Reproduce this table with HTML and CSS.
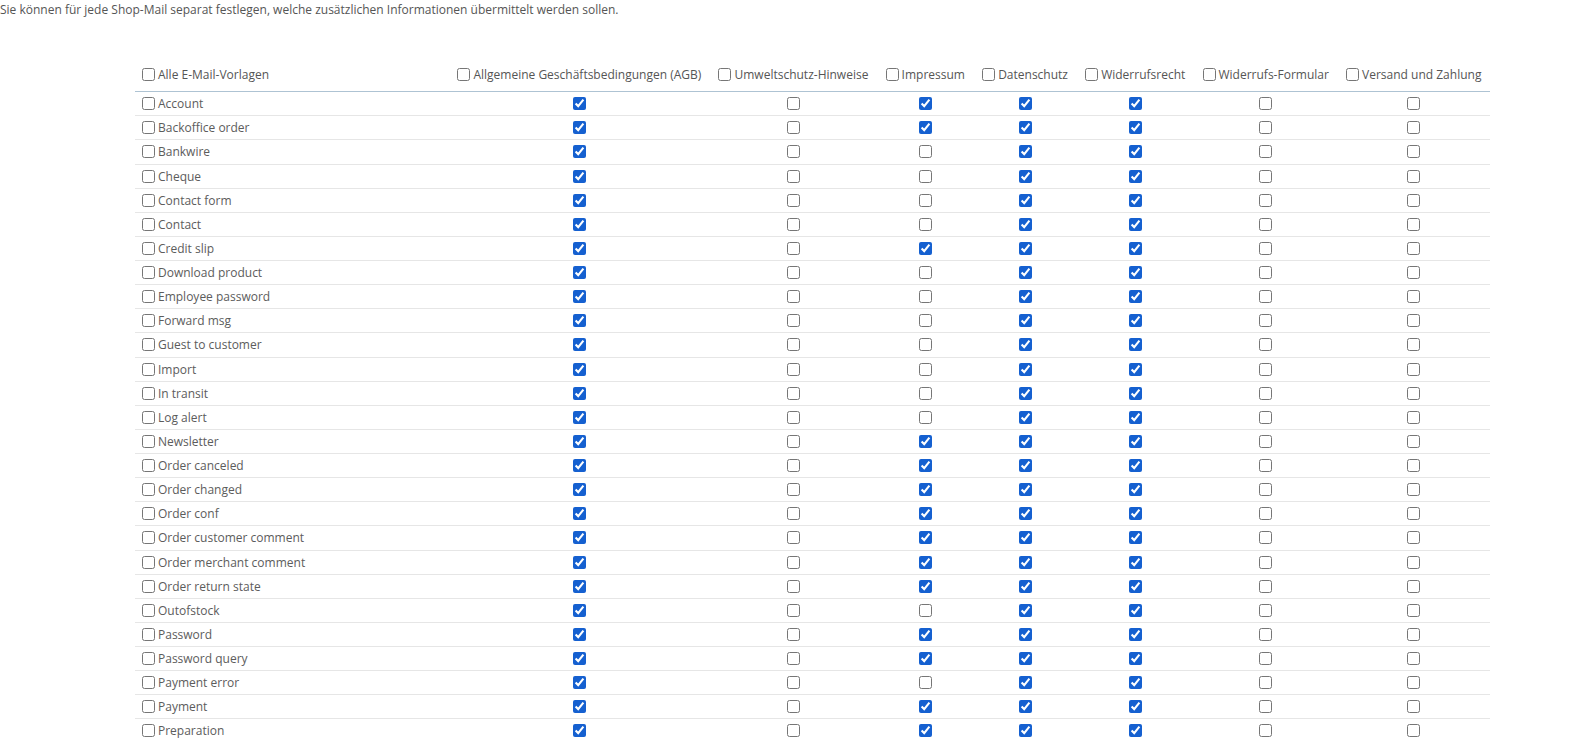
FILE: index.html
```html
<!DOCTYPE html>
<html lang="de">
<head>
<meta charset="utf-8">
<title>E-Mail-Vorlagen</title>
<link rel="stylesheet" href="styles.css">
</head>
<body>
<p class="intro">Sie können für jede Shop-Mail separat festlegen, welche zusätzlichen Informationen übermittelt werden sollen.</p>
<div class="wrap">
<table class="matrix">
<thead>
<tr>
<th class="name"><label><input type="checkbox">Alle E-Mail-Vorlagen</label></th>
<th class="opt"><label><input type="checkbox">Allgemeine Geschäftsbedingungen (AGB)</label></th>
<th class="opt"><label><input type="checkbox">Umweltschutz-Hinweise</label></th>
<th class="opt"><label><input type="checkbox">Impressum</label></th>
<th class="opt"><label><input type="checkbox">Datenschutz</label></th>
<th class="opt"><label><input type="checkbox">Widerrufsrecht</label></th>
<th class="opt"><label><input type="checkbox">Widerrufs-Formular</label></th>
<th class="opt"><label><input type="checkbox">Versand und Zahlung</label></th>
</tr>
</thead>
<tbody id="rows"></tbody>
</table>
</div>
<script src="app.js"></script>
</body>
</html>
```
FILE: styles.css
```css
html, body {
  margin: 0;
  padding: 0;
  background: #fff;
}
body {
  font-family: "Open Sans", "Liberation Sans", sans-serif;
  font-size: 12px;
  line-height: 1.42857;
  color: #555;
}
.intro {
  margin: 0;
  padding-top: 1px;
}
.wrap {
  padding: 40px 0 0 135px;
  width: 1355px;
}
.matrix {
  width: 100%;
  border-collapse: collapse;
}
.matrix th {
  font-weight: normal;
  text-align: left;
  padding: 8px 8.6px 8px;
  border-bottom: 1px solid #aec3d3;
  white-space: nowrap;
}
.matrix th.name {
  padding-left: 7px;
}
.matrix th.opt {
  width: 1%;
}
.matrix label {
  display: flex;
  align-items: center;
  height: 17px;
}
.matrix td label {
  height: 17.14px;
}
.matrix input[type="checkbox"] {
  width: 13px;
  height: 13px;
  margin: 0 3px 0 0;
  accent-color: #1560d0;
  flex: none;
}
.matrix td {
  padding: 3px 8px;
  border-top: 1px solid #e6e6e6;
  vertical-align: middle;
  white-space: nowrap;
}
.matrix td.name {
  padding-left: 7px;
  color: #5c5c5c;
}
.matrix td.cell {
  text-align: center;
}
.matrix .box {
  display: flex;
  align-items: center;
  justify-content: center;
  height: 17.14px;
}
.matrix .box input[type="checkbox"] {
  margin: 0;
}
```
FILE: app.js
```js
var data = [
  ["Account", "1011100"],
  ["Backoffice order", "1011100"],
  ["Bankwire", "1001100"],
  ["Cheque", "1001100"],
  ["Contact form", "1001100"],
  ["Contact", "1001100"],
  ["Credit slip", "1011100"],
  ["Download product", "1001100"],
  ["Employee password", "1001100"],
  ["Forward msg", "1001100"],
  ["Guest to customer", "1001100"],
  ["Import", "1001100"],
  ["In transit", "1001100"],
  ["Log alert", "1001100"],
  ["Newsletter", "1011100"],
  ["Order canceled", "1011100"],
  ["Order changed", "1011100"],
  ["Order conf", "1011100"],
  ["Order customer comment", "1011100"],
  ["Order merchant comment", "1011100"],
  ["Order return state", "1011100"],
  ["Outofstock", "1001100"],
  ["Password", "1011100"],
  ["Password query", "1011100"],
  ["Payment error", "1001100"],
  ["Payment", "1011100"],
  ["Preparation", "1011100"]
];
var tbody = document.getElementById("rows");
data.forEach(function (row) {
  var tr = document.createElement("tr");
  var td = document.createElement("td");
  td.className = "name";
  var lab = document.createElement("label");
  var cb = document.createElement("input");
  cb.type = "checkbox";
  lab.appendChild(cb);
  lab.appendChild(document.createTextNode(row[0]));
  td.appendChild(lab);
  tr.appendChild(td);
  for (var i = 0; i < row[1].length; i++) {
    var c = document.createElement("td");
    c.className = "cell";
    var d = document.createElement("div");
    d.className = "box";
    var x = document.createElement("input");
    x.type = "checkbox";
    x.checked = row[1][i] === "1";
    d.appendChild(x);
    c.appendChild(d);
    tr.appendChild(c);
  }
  tbody.appendChild(tr);
});
```
